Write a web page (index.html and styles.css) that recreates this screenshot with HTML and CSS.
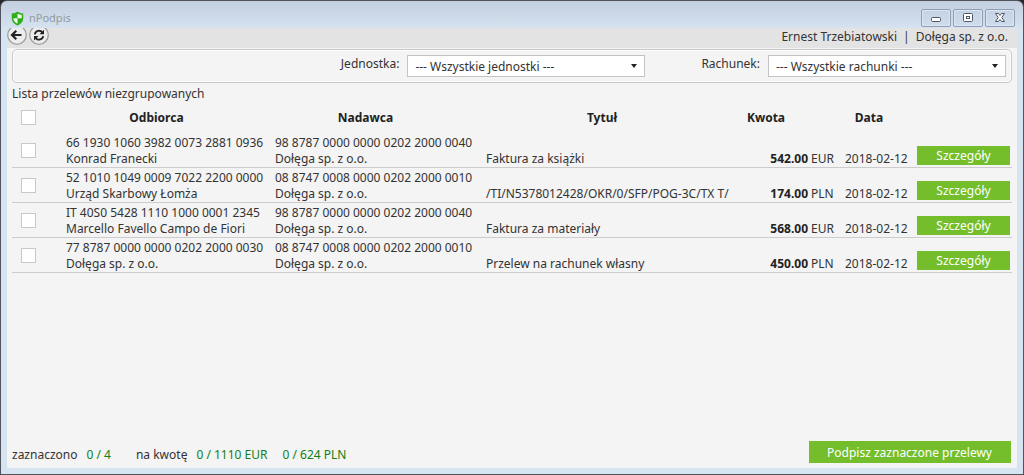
FILE: index.html
```html
<!DOCTYPE html>
<html lang="pl">
<head>
<meta charset="utf-8">
<title>nPodpis</title>
<link rel="stylesheet" href="styles.css">
</head>
<body>
<div class="window">
  <header class="titlebar">
    <svg class="shield" viewBox="0 0 14 16" aria-hidden="true">
      <path d="M7 .5C5 2 3 2.500 .8 2.500V7.500C.8 11.500 3.500 14.200 7 15.500C10.500 14.200 13.200 11.500 13.200 7.500V2.500C11 2.500 9 2 7 .5Z" fill="#2fae1c"/>
      <path d="M7 2.800V7.800H11.500V4C9.900 3.900 8.500 3.500 7 2.800Z" fill="#eefbe9"/>
      <path d="M7 7.800H2.500C2.600 10.300 4.500 12.600 7 13.600Z" fill="#eefbe9"/>
    </svg>
    <span class="app-name">nPodpis</span>
    <div class="window-buttons">
      <button class="window-button" type="button" aria-label="Minimalizuj"><svg viewBox="0 0 14 12"><rect x="2.500" y="5.500" width="9" height="4" rx="1" fill="#fff" stroke="#4f5665"/></svg></button>
      <button class="window-button" type="button" aria-label="Maksymalizuj"><svg viewBox="0 0 14 12"><rect x="2.500" y="1.500" width="9" height="8" rx="1" fill="#fff" stroke="#4f5665"/><rect x="5.500" y="4.500" width="3" height="2" fill="#fff" stroke="#4f5665"/></svg></button>
      <button class="window-button" type="button" aria-label="Zamknij"><svg viewBox="0 0 14 12"><path d="M2.500 1.500H5.500L7 3.500L8.500 1.500H11.500L8.800 5.500L11.500 9.500H8.500L7 7.500L5.500 9.500H2.500L5.200 5.500Z" fill="#fff" stroke="#4f5665" stroke-linejoin="round"/></svg></button>
    </div>
  </header>
  <div class="client">
    <nav class="toolbar">
      <div class="tools">
        <button class="tool" type="button" aria-label="Wstecz"><svg viewBox="0 0 20 20"><circle cx="10" cy="10" r="9.300" fill="#ececec" stroke="#a0a0a0" stroke-width="1.300"/><path d="M14.500 10H5.500M9.300 5.800L5 10L9.300 14.200" fill="none" stroke="#222" stroke-width="2.200"/></svg></button>
        <button class="tool" type="button" aria-label="Odśwież"><svg viewBox="0 0 20 20"><circle cx="10" cy="10" r="9.300" fill="#ececec" stroke="#a0a0a0" stroke-width="1.300"/><path d="M5.800 9.300A4.300 4.300 0 0 1 13.300 7.300M14.200 11.100A4.300 4.300 0 0 1 6.700 13.100" fill="none" stroke="#222" stroke-width="1.800"/><path d="M15 4.800V9.300H10.500ZM5 15.600V11.100H9.500Z" fill="#222"/></svg></button>
      </div>
      <div class="user"><span>Ernest Trzebiatowski</span><span>|</span><span>Dołęga sp. z o.o.</span></div>
    </nav>
    <main class="content">
      <form class="filters">
        <label class="filter-label" for="unit">Jednostka:</label>
        <div class="picker"><select id="unit"><option>--- Wszystkie jednostki ---</option></select></div>
        <label class="filter-label account-label" for="account">Rachunek:</label>
        <div class="picker"><select id="account"><option>--- Wszystkie rachunki ---</option></select></div>
      </form>
      <h1 class="list-title">Lista przelewów niezgrupowanych</h1>
      <table class="transfers">
        <colgroup><col class="col-check"><col class="col-party"><col class="col-party"><col class="col-subject"><col class="col-amount"><col class="col-currency"><col class="col-date"><col class="col-action"></colgroup>
        <thead>
          <tr><th class="check"><input type="checkbox" aria-label="Zaznacz wszystkie"></th><th>Odbiorca</th><th>Nadawca</th><th class="subject-head">Tytuł</th><th class="amount-head">Kwota</th><th></th><th class="date-head">Data</th><th></th></tr>
        </thead>
        <tbody>
          <tr><td class="check"><input type="checkbox" aria-label="Zaznacz: Faktura za książki"></td><td>66 1930 1060 3982 0073 2881 0936<br>Konrad Franecki</td><td>98 8787 0000 0000 0202 2000 0040<br>Dołęga sp. z o.o.</td><td class="subject">Faktura za książki</td><td class="amount">542.00</td><td class="currency">EUR</td><td>2018-02-12</td><td class="action"><button class="green details" type="button">Szczegóły</button></td></tr>
          <tr><td class="check"><input type="checkbox" aria-label="Zaznacz: Urząd Skarbowy Łomża"></td><td>52 1010 1049 0009 7022 2200 0000<br>Urząd Skarbowy Łomża</td><td>08 8747 0008 0000 0202 2000 0010<br>Dołęga sp. z o.o.</td><td class="subject">/TI/N5378012428/OKR/0/SFP/POG-3C/TX T/</td><td class="amount">174.00</td><td class="currency">PLN</td><td>2018-02-12</td><td class="action"><button class="green details" type="button">Szczegóły</button></td></tr>
          <tr><td class="check"><input type="checkbox" aria-label="Zaznacz: Faktura za materiały"></td><td>IT 40S0 5428 1110 1000 0001 2345<br>Marcello Favello Campo de Fiori</td><td>98 8787 0000 0000 0202 2000 0040<br>Dołęga sp. z o.o.</td><td class="subject">Faktura za materiały</td><td class="amount">568.00</td><td class="currency">EUR</td><td>2018-02-12</td><td class="action"><button class="green details" type="button">Szczegóły</button></td></tr>
          <tr><td class="check"><input type="checkbox" aria-label="Zaznacz: Przelew na rachunek własny"></td><td>77 8787 0000 0000 0202 2000 0030<br>Dołęga sp. z o.o.</td><td>08 8747 0008 0000 0202 2000 0010<br>Dołęga sp. z o.o.</td><td class="subject">Przelew na rachunek własny</td><td class="amount">450.00</td><td class="currency">PLN</td><td>2018-02-12</td><td class="action"><button class="green details" type="button">Szczegóły</button></td></tr>
        </tbody>
      </table>
      <footer class="summary">
        <div class="totals">
          <span>zaznaczono</span><span class="value count">0 / 4</span><span>na kwotę</span><span class="value sum">0 / 1110 EUR</span><span class="value">0 / 624 PLN</span>
        </div>
        <button class="green sign" type="button">Podpisz zaznaczone przelewy</button>
      </footer>
    </main>
  </div>
</div>
</body>
</html>
```

FILE: styles.css
```css
* { box-sizing: border-box; }

body {
  margin: 0;
  background: #25252b;
  color: #333;
  font: 12px/16px "Noto Sans", "Open Sans", sans-serif;
}

button, select, input { margin: 0; font: inherit; color: inherit; }
svg { display: block; }

.window {
  display: flex;
  flex-direction: column;
  min-height: 100vh;
  padding: 0 6px 6px;
  border: 1px solid #50525c;
  border-radius: 7px 7px 0 0;
  background: linear-gradient(#c3cede, #d6e3f1 28px, #d6e3f1);
}

.titlebar {
  display: flex;
  align-items: center;
  height: 27px;
  padding: 7px 2px 0 4px;
}
.shield { width: 13px; height: 15px; }
.app-name { margin-left: 5px; color: #929aa5; font-size: 11px; }
.window-buttons { display: flex; gap: 2px; margin-left: auto; }
.window-button {
  display: grid;
  place-items: center;
  width: 30px;
  height: 18px;
  padding: 0;
  border: 1px solid #8f9eb5;
  border-radius: 2px;
  background: linear-gradient(#c5d2e3, #d0dded);
  box-shadow: inset 0 0 0 1px #dbe6f2;
}
.window-button svg { width: 14px; height: 12px; }

.client { display: flex; flex: 1; flex-direction: column; background: #f4f4f4; }
.toolbar {
  display: flex;
  justify-content: space-between;
  height: 20px;
  padding-right: 9px;
  background: #e3e3e3;
}
.tools { display: flex; gap: 2px; height: 20px; overflow: hidden; }
.tool { width: 20px; height: 20px; margin-top: -3px; padding: 0; border: 0; background: none; }
.tool svg { width: 20px; height: 20px; }
.user { display: flex; gap: 6px; padding-top: 1px; }

.content { display: flex; flex: 1; flex-direction: column; padding: 1px 5px 5px; }
.filters {
  display: flex;
  justify-content: flex-end;
  height: 34px;
  padding: 5px;
  border: 1px solid #c8c8c8;
  border-radius: 5px;
  box-shadow: inset 0 0 0 1px #fff;
}
.filter-label { margin-right: 8px; padding-top: 1px; }
.account-label { margin-left: 56px; }
.picker { position: relative; width: 238px; }
.picker::after {
  content: "";
  position: absolute;
  top: 9px;
  right: 8px;
  border: 3px solid transparent;
  border-top: 4px solid #222;
  border-bottom: 0;
  pointer-events: none;
}
.picker select {
  width: 100%;
  height: 22px;
  padding: 1px 20px 0 7px;
  border: 1px solid #c4c4c4;
  border-radius: 0;
  background: #fff;
  appearance: none;
}

.list-title { margin: 3px 0 0; font-size: 12px; font-weight: 400; }

.transfers { width: 100%; border-collapse: collapse; table-layout: fixed; }
.col-check { width: 50px; }
.col-party { width: 209px; }
.col-amount { width: 76px; }
.col-currency { width: 33px; }
.col-date { width: 72px; }
.col-action { width: 99px; }
.transfers th { height: 31px; padding: 0 20px 0 0; color: #222; }
.transfers .subject-head { padding-right: 8px; }
.transfers .amount-head { padding-right: 8px; }
.transfers .date-head { padding-right: 16px; }
.transfers td {
  padding: 2px 0 0 4px;
  border-bottom: 1px solid #ccc;
  vertical-align: bottom;
  white-space: nowrap;
}
.transfers .check { padding: 0 0 0 9px; text-align: left; vertical-align: middle; }
.transfers .subject { padding-left: 6px; }
.transfers .amount { padding-left: 0; color: #222; font-weight: 700; text-align: right; }
.transfers .currency { padding-left: 3px; }
.transfers .action { padding: 0 2px 2px 4px; }
input[type="checkbox"] {
  display: block;
  width: 15px;
  height: 15px;
  border: 1px solid #c8c8c8;
  background: #fff;
  appearance: none;
}
input[type="checkbox"]:checked { background: #74be2b; }

.green { display: block; padding: 1px 0 0; border: 0; background: #74be2b; color: #fff; }
.details { width: 100%; height: 19px; }

.summary { display: flex; align-items: center; justify-content: space-between; margin-top: auto; padding-right: 1px; }
.totals { display: flex; padding-top: 6px; }
.value { margin-left: 9px; color: #128012; }
.count { margin-right: 25px; }
.sum { margin-right: 6px; }
.sign { height: 22px; padding: 1px 19px 0 18px; }
```
